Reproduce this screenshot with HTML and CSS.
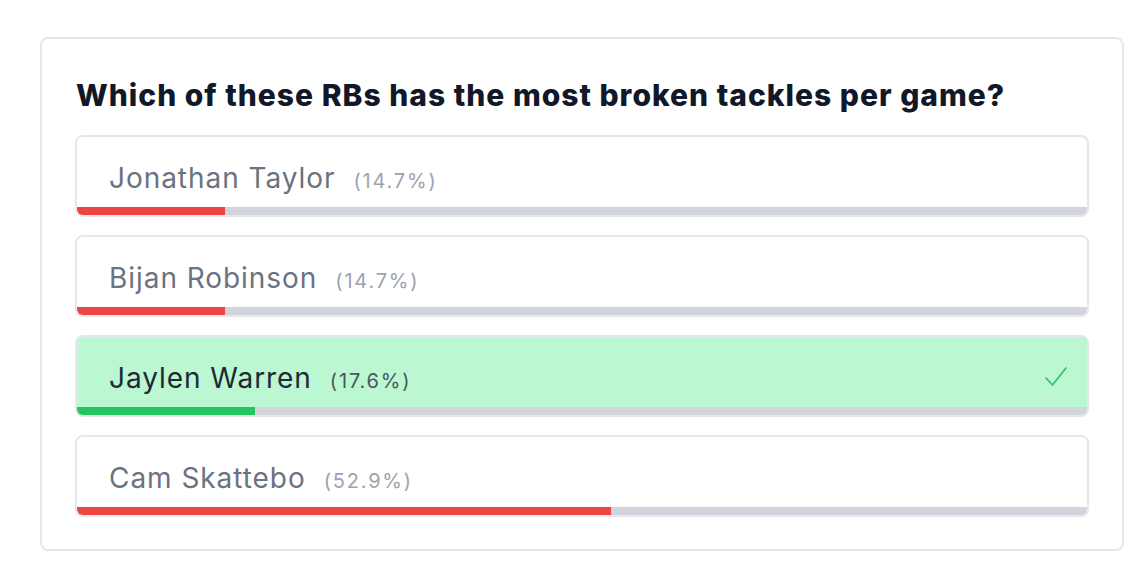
FILE: index.html
```html
<!DOCTYPE html>
<html lang="en">
<head>
<meta charset="utf-8">
<title>Poll</title>
<link rel="stylesheet" href="styles.css">
</head>
<body>
<div class="page">
  <div class="card">
    <h2 class="question">Which of these RBs has the most broken tackles per game?</h2>
    <div class="options">
      <div class="option">
        <div class="label"><span class="name">Jonathan Taylor</span><span class="pct">(14.7%)</span></div>
        <div class="bar"><div class="fill wrong" style="width:14.7%"></div></div>
      </div>
      <div class="option">
        <div class="label"><span class="name">Bijan Robinson</span><span class="pct">(14.7%)</span></div>
        <div class="bar"><div class="fill wrong" style="width:14.7%"></div></div>
      </div>
      <div class="option correct">
        <div class="label"><span class="name">Jaylen Warren</span><span class="pct">(17.6%)</span>
          <svg class="check" viewBox="0 0 24 24" width="24" height="24" fill="none" stroke="currentColor" stroke-width="1.6" stroke-linecap="round" stroke-linejoin="round"><path d="M2 13l6.5 7L22 3"/></svg>
        </div>
        <div class="bar"><div class="fill right" style="width:17.6%"></div></div>
      </div>
      <div class="option">
        <div class="label"><span class="name">Cam Skattebo</span><span class="pct">(52.9%)</span></div>
        <div class="bar"><div class="fill wrong" style="width:52.9%"></div></div>
      </div>
    </div>
  </div>
</div>
</body>
</html>
```

FILE: styles.css
```css
* { box-sizing: border-box; }
html, body { margin: 0; padding: 0; background: #ffffff; }
body { font-family: Inter, "Noto Sans", sans-serif; }
.page { padding: 37px 24px 35px 40px; }
.card {
  width: 1084px;
  border: 2px solid #e5e7eb;
  border-radius: 8px;
  padding: 38px 33px 32px 33px;
  background: #fff;
}
.question {
  margin: 0 0 22px 1px;
  font-size: 30px;
  line-height: 36px;
  font-weight: 800;
  color: #111827;
  letter-spacing: 1px;
}
.options { display: flex; flex-direction: column; gap: 18px; }
.option {
  border: 2px solid #e5e7eb;
  border-radius: 8px;
  overflow: hidden;
  background: #fff;
}
.option.correct { background: #bbf7d0; }
.label {
  display: flex;
  align-items: baseline;
  padding: 24px 19px 12px 32px;
  height: 70px;
}
.name { font-size: 28px; line-height: 34px; color: #6b7280; letter-spacing: 0.95px; }
.pct { font-size: 20px; line-height: 34px; color: #9ca3af; margin-left: 18px; letter-spacing: 1.8px; }
.correct .name { color: #1f2937; }
.correct .pct { color: #4b5563; }
.check { margin-left: auto; color: #22c55e; align-self: center; position: relative; top: -1px; }
.bar { height: 8px; background: #d1d5db; }
.fill { height: 100%; }
.fill.wrong { background: #ef4444; }
.fill.right { background: #22c55e; }
```
